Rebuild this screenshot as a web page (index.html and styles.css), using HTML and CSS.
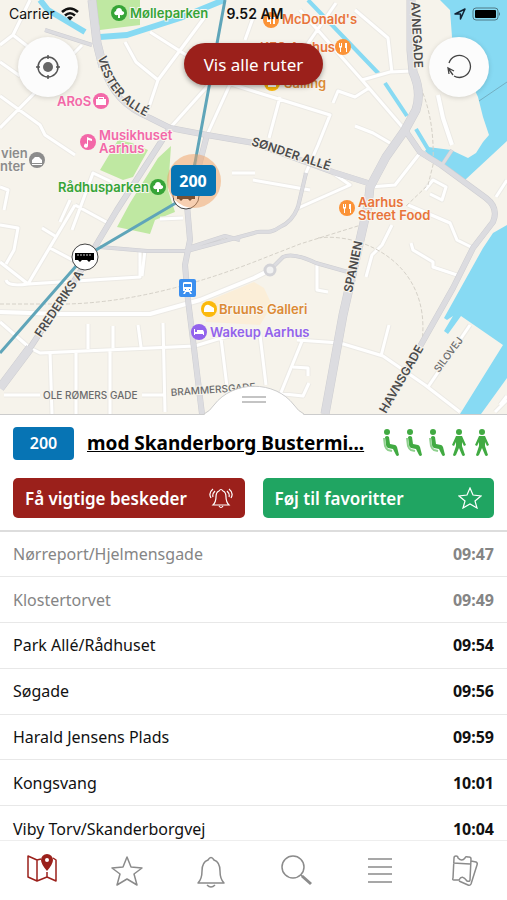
FILE: index.html
```html
<!DOCTYPE html>
<html lang="da">
<head>
	<title>Rute 200</title>
	<meta charset="utf-8">
	<meta name="viewport" content="width=device-width,initial-scale=1.0">
	<link rel="stylesheet" href="styles.css">
</head>
<body>
<div class="app">

	<!-- map -->
	<section class="map">
		<svg class="map-svg" viewBox="0 0 507 414" preserveAspectRatio="xMidYMid slice">
			<defs>
				<path id="vester" d="M98 57C103 82 118 106 156 121"/>
				<path id="sonder" d="M251 145Q290 158 337 173"/>
				<path id="frederiks" d="M41 338L92 262"/>
				<path id="spanien" d="M352 293L364 235"/>
				<path id="havn" d="M386 414L432 334"/>
				<path id="silo" d="M439 373L468 334"/>
				<path id="small-streets" d="M30 0L13 35L0 45M13 35L45 60M82 45L0 128M0 96L40 125L45 135L75 155M0 62L20 76M125 42L136 62L158 80L207 14M150 32L183 53L200 64M158 80L149 107M170 128L240 50M207 135L232 80M203 75L253 91L330 115L318 145L305 175M280 97L269 138M232 173H255M0 187L8 190L4 210M72 230L93 173L112 182M0 225L18 228L14 250L6 264M0 262L28 284L75 205M75 205L108 223M50 248L80 264M6 280Q8 287 28 284L140 277V250M145 250L142 276M60 222L70 200M42 228L55 236M254 15L245 40M300 55L336 3M300 10L362 80L390 72L411 71M355 10L388 38L392 73M333 103L338 91L355 97L369 88M362 80L405 130M355 126L373 133L390 143M253 180L310 190M333 173L350 185L296 209M370 187L395 185L420 153M425 190L433 180L446 187L442 200L430 194M392 225L382 245L372 255L366 277M411 243L413 250L433 262V267L457 275M408 205L450 223L457 240L473 248M317 263V290L328 292M496 197L507 180M0 322L30 348L40 353L195 346L218 339L233 335M88 324V349M113 326V348M138 325L141 347M163 323L165 412M50 352L52 414M76 352V414M110 351V414M4 395H40M142 395H165M221 338L228 395M260 335L266 385M297 340L340 343L383 356L425 385L460 412M302 341L280 395M293 367L308 368V376M275 393L303 396L309 383M389 325L381 356M428 387L470 325M500 405L507 396M495 412L507 400M160 219L183 218"/>
				<path id="wide-streets" d="M0 312L60 314H150L200 300L254 278L270 270M438 95L443 118L452 145"/>
				<path id="thin-roads" d="M45 30L92 45M452 150L442 165M306 173L298 207Q292 222 280 227C268 236 262 229 254 233L187 251H147L100 247M188 248L225 236L240 240M270 270L283 257Q293 252 316 263L348 272"/>
				<path id="mid-roads" d="M103 67Q113 103 150 118L170 128L207 135L254 143L333 172L368 183M207 135L197 173L187 205L190 240L185 265L188 300L193 340L202 414M405 130L420 152L441 165L486 198Q499 208 493 222L473 248L453 288L383 412M170 128L117 210L80 272L30 348"/>
				<path id="big-roads" d="M92 0L97 43L103 67M411 0V50L413 72Q422 92 416 110L405 130L386 157L370 187L368 205L343 315L325 414M30 348L0 388"/>
			</defs>

			<!-- parks, water -->
			<path class="park" d="M95 0H140V25L100 30ZM100 170L118 140L132 143L148 150L133 177L123 180ZM158 158L171 146L168 190L175 212L155 220L150 234L117 227L130 203Z"/>
			<path class="mall" d="M203 303L254 282L264 288L272 305L260 325L206 322Z"/>
			<path class="water" d="M440 0L450 10L452 37L470 80L478 97L483 117L489 135L483 142L476 153L468 158L451 150L428 147L425 151L441 165L465 180L507 141V0Z"/>
			<path class="water" d="M507 225L493 233L483 248L444 318L447 320L453 316L444 331L448 334L461 316L503 345L460 414H481L507 378Z"/>
			<path class="canal" d="M308 0L380 75M385 83L407 116M416 129L428 149"/>
			<path class="canal river" d="M40 0L48 10L85 32M100 37L127 35L180 18L224 0"/>
			<path class="seam" d="M479 101L507 82"/>

			<!-- streets -->
			<use class="street-edge" href="#small-streets"/>
			<use class="street" href="#small-streets"/>
			<use class="street-edge wide" href="#wide-streets"/>
			<use class="street wide" href="#wide-streets"/>
			<path class="rail" d="M0 304H67Q150 302 254 262L300 244L361 225M318 238C360 232 432 262 422 342M418 82C432 110 434 140 433 165L428 185L405 207"/>

			<!-- main roads: all edges first so that the crossings stay open -->
			<use class="road-edge" href="#thin-roads"/>
			<use class="road-edge mid" href="#mid-roads"/>
			<use class="road-edge big" href="#big-roads"/>
			<use class="road" href="#thin-roads"/>
			<use class="road mid" href="#mid-roads"/>
			<use class="road big" href="#big-roads"/>
			<circle class="roundabout" cx="270" cy="270" r="5"/>

			<!-- road names -->
			<g class="road-name">
				<text><textPath href="#vester">VESTER ALLÉ</textPath></text>
				<text><textPath href="#sonder">SØNDER ALLÉ</textPath></text>
				<text><textPath href="#frederiks">FREDERIKS A</textPath></text>
				<text><textPath href="#spanien">SPANIEN</textPath></text>
				<text><textPath href="#havn">HAVNSGADE</textPath></text>
				<text transform="translate(411 2) rotate(87)">AVNEGADE</text>
			</g>
			<g class="road-name thin">
				<text><textPath href="#silo">SILOVEJ</textPath></text>
				<text x="43" y="399">OLE RØMERS GADE</text>
				<text transform="translate(171 396) rotate(-4)">BRAMMERSGADE</text>
			</g>

			<!-- places -->
			<g class="poi green">
				<circle cx="119" cy="13" r="8"/>
				<path class="glyph" d="M118 18V15C114 16 113 12 116 11C116 7 122 7 122 11C126 12 124 16 120 15V18Z"/>
				<text x="130" y="18">Mølleparken</text>
				<circle cx="158" cy="187" r="8"/>
				<path class="glyph" d="M157 192V189C153 190 152 186 155 185C155 181 161 181 161 185C165 186 163 190 159 189V192Z"/>
				<text x="58" y="192">Rådhusparken</text>
			</g>
			<g class="poi pink">
				<text x="57" y="106">ARoS</text>
				<circle cx="101" cy="101" r="8"/>
				<path class="glyph" d="M96 99H98V97H104V99H106V105H96ZM99 99H103V98H99Z"/>
				<circle cx="88" cy="142" r="8"/>
				<path class="glyph" d="M87 137L92 139V141L88 140V146A2 2 0 1 1 87 144Z"/>
				<text x="99" y="140">Musikhuset</text>
				<text x="99" y="153">Aarhus</text>
			</g>
			<g class="poi grey">
				<text x="1" y="158">vien</text>
				<text x="0" y="171">nter</text>
				<circle cx="37" cy="160" r="8"/>
				<path class="glyph" d="M32 163V160L35 157H39L42 160V163ZM32 164H42V165H32Z"/>
			</g>
			<g class="poi orange">
				<circle cx="271" cy="20" r="8"/>
				<path class="glyph" d="M267 22V17H268V20H270V17H271V24H270V22ZM273 17H275V24H273Z"/>
				<text x="282" y="24">McDonald's</text>
				<text x="260" y="52">KFC Aarhus</text>
				<circle cx="343" cy="47" r="8"/>
				<path class="glyph" d="M339 43H340V46H341V43H342V47L341 48V52H340V48L339 47ZM345 43H347V52H346V48H345Z"/>
				<circle cx="347" cy="208" r="8"/>
				<path class="glyph" d="M343 204H344V207H345V204H346V208L345 209V213H344V209L343 208ZM349 204H351V213H350V209H349Z"/>
				<text x="358" y="207">Aarhus</text>
				<text x="358" y="220">Street Food</text>
			</g>
			<g class="poi gold">
				<circle cx="272" cy="83" r="8"/>
				<path class="glyph" d="M268 82H276V87H268Z"/>
				<text x="284" y="88">Salling</text>
				<circle cx="209" cy="309" r="8"/>
				<path class="glyph" d="M204 309Q205 304 209 305L214 308V312H204Z"/>
				<text x="219" y="314">Bruuns Galleri</text>
			</g>
			<g class="poi purple">
				<circle cx="199" cy="332" r="8"/>
				<path class="glyph" d="M194 329H195V332H197V330H203L204 332V335H203V334H195V335H194Z"/>
				<text x="210" y="337">Wakeup Aarhus</text>
			</g>
			<rect class="station" x="179" y="279" width="17" height="18" rx="2"/>
			<path class="glyph" d="M183 283Q183 282 185 282H190Q192 282 192 283V291H190L192 294H190L189 292H186L185 294H183L185 291H183Z"/>
			<path class="station" d="M184 284H191V287H184ZM185 289H186V290H185ZM189 289H190V290H189Z"/>

			<!-- bus route -->
			<path class="route" d="M225 0L195 163L186 197L84 257L0 353"/>
			<g class="stop">
				<circle cx="186" cy="196" r="13"/>
				<circle cx="85" cy="257" r="13"/>
				<path d="M75 253H94V260H91L89 262L87 260H82L80 262L78 260H75Z"/>
				<path class="bus-windows" d="M77 255H92"/>
				<path d="M177 192H195V199H192L190 201L188 199H183L181 201L179 199H177Z"/>
			</g>
			<circle class="halo" cx="194" cy="181" r="27"/>
			<rect class="line-box" x="171" y="165" width="45" height="31" rx="5"/>
			<text class="line-text" x="193" y="187">200</text>
		</svg>

		<header class="overlay">
			<div class="status">
				<div class="status-left">
					<span>Carrier</span>
					<svg width="18" height="14" viewBox="0 0 18 14"><path fill="none" stroke="#111" stroke-width="2.6" d="M1 5Q9-2 17 5M4 8.500Q9 4 14 8.500"/><path fill="#111" d="M6 10.500Q9 8 12 10.500L9 13.500Z"/></svg>
				</div>
				<time class="clock">9.52 AM</time>
				<div class="status-right">
					<svg width="12" height="12" viewBox="0 0 12 12"><path fill="none" stroke="#123" stroke-width="1.5" stroke-linejoin="round" d="M1 6L11 1L6.500 11V6Z"/></svg>
					<svg width="29" height="14" viewBox="0 0 29 14"><rect x="1" y="1" width="25" height="12" rx="3" fill="none" stroke="#4f7885"/><rect x="3" y="3" width="21" height="8" rx="1"/><path fill="#4f7885" d="M27 5Q29 7 27 9Z"/></svg>
				</div>
			</div>
			<div class="controls">
				<button class="round-btn" type="button" aria-label="Min position">
					<svg width="26" height="26" viewBox="0 0 26 26"><circle cx="13" cy="13" r="10" fill="none" stroke="#555" stroke-width="1.500"/><circle cx="13" cy="13" r="5" fill="#666"/><path stroke="#555" stroke-width="1.500" d="M13 1V5M13 21V25M1 13H5M21 13H25"/></svg>
				</button>
				<button class="pill" type="button">Vis alle ruter</button>
				<button class="round-btn" type="button" aria-label="Opdater">
					<svg width="28" height="26" viewBox="0 0 28 26"><path fill="none" stroke="#444" stroke-width="1.300" d="M4 9A11 11 0 1 1 9 22M4 20L3 14L9 17M3 14L8 21"/></svg>
				</button>
			</div>
		</header>
	</section>

	<!-- route panel -->
	<section class="panel">
		<svg class="grip" width="100" height="30" viewBox="0 0 100 30"><path class="grip-fill" d="M0 30Q6 26 10 20C29-5 71-5 90 20Q94 26 100 30Z"/><path class="grip-edge" d="M0 29Q6 26 10 20C29-5 71-5 90 20Q94 26 100 29"/><path class="grip-line" d="M38 12H62M38 17H62"/></svg>
		<div class="route-head">
			<span class="badge">200</span>
			<a class="direction" href="#stops">mod Skanderborg Bustermi...</a>
			<svg class="people" width="112" height="28" viewBox="0 0 112 28">
				<defs>
					<g id="sit"><circle cx="5" cy="3" r="3"/><path d="M3 8Q5 6 7 8L8 15L13 16Q14 16 15 18L17 26Q15 28 14 26L11 20L6 19Q4 18 4 16Z"/><path class="seat" d="M2 9L3 17Q4 20 6 21L10 22"/></g>
					<g id="stand"><circle cx="7" cy="3" r="3"/><path d="M4 7H10L14 16L12 17L10 13V17L13 26Q11 28 10 26L7 19L4 26Q2 28 1 26L4 17V13L2 17L0 16Z"/></g>
				</defs>
				<use href="#sit"/>
				<use href="#sit" x="23"/>
				<use href="#sit" x="46"/>
				<use href="#stand" x="70"/>
				<use href="#stand" x="93"/>
			</svg>
		</div>
		<div class="actions">
			<button class="action red" type="button">
				<span>Få vigtige beskeder</span>
				<svg width="24" height="22" viewBox="0 0 24 22"><path d="M4 18Q7 15 7 10Q7 5 10 4Q12 1 14 4Q17 5 17 10Q17 15 20 18ZM10 19Q12 22 14 19M4 2Q-1 6 2 11M6 4Q3 7 4 10M20 2Q25 6 22 11M18 4Q21 7 20 10"/></svg>
			</button>
			<button class="action green-btn" type="button">
				<span>Føj til favoritter</span>
				<svg width="24" height="22" viewBox="0 0 24 22"><path d="M12 1L15 8L23 9L17 14L19 21L12 17L5 21L7 14L1 9L9 8Z"/></svg>
			</button>
		</div>
	</section>

	<!-- stops -->
	<main class="stops" id="stops">
		<table class="stop-table">
			<tr class="passed"><td>Nørreport/Hjelmensgade</td><td class="time">09:47</td></tr>
			<tr class="passed"><td>Klostertorvet</td><td class="time">09:49</td></tr>
			<tr><td>Park Allé/Rådhuset</td><td class="time">09:54</td></tr>
			<tr><td>Søgade</td><td class="time">09:56</td></tr>
			<tr><td>Harald Jensens Plads</td><td class="time">09:59</td></tr>
			<tr><td>Kongsvang</td><td class="time">10:01</td></tr>
			<tr><td>Viby Torv/Skanderborgvej</td><td class="time">10:04</td></tr>
		</table>
	</main>

	<!-- tab bar -->
	<nav class="tabs">
		<a class="tab active" href="#kort" aria-label="Kort">
			<svg width="32" height="34" viewBox="0 0 32 34"><path d="M15 5L11 6L2 2V23L11 27L21 23L30 27V6L27 4M11 6V27M21 18V23"/><path class="pin" d="M21 17Q15 10 15 6A6 6 0 0 1 27 6Q27 10 21 17ZM21 4A2 2 0 1 0 21 8A2 2 0 0 0 21 4Z"/></svg>
		</a>
		<a class="tab" href="#favoritter" aria-label="Favoritter">
			<svg width="32" height="34" viewBox="0 0 32 34"><path d="M16 3L20 13L31 14L23 20L26 31L16 25L6 31L9 20L1 14L12 13Z"/></svg>
		</a>
		<a class="tab" href="#beskeder" aria-label="Beskeder">
			<svg width="32" height="34" viewBox="0 0 32 34"><path d="M3 29Q7 25 7 17Q7 8 13 6Q16 1 19 6Q25 8 25 17Q25 25 29 29ZM12 31Q16 35 20 31"/></svg>
		</a>
		<a class="tab" href="#soeg" aria-label="Søg">
			<svg width="32" height="34" viewBox="0 0 32 34"><circle cx="13" cy="13" r="11"/><path d="M21 21L23 23"/><path class="thick" d="M22 22L31 30"/></svg>
		</a>
		<a class="tab" href="#menu" aria-label="Menu">
			<svg width="32" height="34" viewBox="0 0 32 34"><path d="M4 5H28M4 13H28M4 20H28M4 28H28"/></svg>
		</a>
		<a class="tab" href="#billetter" aria-label="Billetter">
			<svg width="32" height="34" viewBox="0 0 32 34"><path d="M5 4Q5 2 7 2Q9 2 9 4Q13 8 16 4Q17 2 19 3H20Q22 3 22 5L21 26Q21 28 18 27Q13 20 10 26L5 26Q3 26 4 24ZM4 9L21 10M22 7L27 8Q29 9 28 11L22 30Q21 32 19 31L10 27"/></svg>
		</a>
	</nav>
</div>
</body>
</html>
```
FILE: styles.css
```css
* {
	box-sizing: border-box;
}
body {
	margin: 0;
	background-color: #fff;
	font-family: "Noto Sans", "Open Sans", sans-serif;
	color: #111;
}
button {
	border: 0;
	padding: 0;
	font-family: inherit;
	cursor: pointer;
}
svg {
	display: block;
	flex: none;
}
.app {
	display: flex;
	flex-direction: column;
	height: 100vh;
}

/* map */
.map {
	position: relative;
	height: 46vh;
	flex: none;
	overflow: hidden;
	background-color: #f6f3eb;
}
.map-svg {
	width: 100%;
	height: 100%;
	font-family: Inter, "Liberation Sans", sans-serif;
}
.map-svg path {
	stroke-linejoin: round;
}
.park {
	fill: #bfe8a2;
}
.mall {
	fill: #fbeed8;
}
.water {
	fill: #87daf3;
}
.canal {
	fill: none;
	stroke: #87daf3;
	stroke-width: 4;
}
.river {
	stroke-width: 6;
}
.seam {
	stroke: #73afc2;
}
.street,
.street-edge,
.road,
.road-edge,
.rail {
	fill: none;
}
.street {
	stroke: #fff;
	stroke-width: 3;
}
.street-edge {
	stroke: #eceae5;
	stroke-width: 5;
}
.street.wide {
	stroke-width: 4;
}
.street-edge.wide {
	stroke-width: 6;
}
.road {
	stroke: #dcdce0;
	stroke-width: 3;
}
.road-edge {
	stroke: #cdcdd1;
	stroke-width: 4;
}
.road.mid {
	stroke-width: 5;
}
.road-edge.mid {
	stroke-width: 6;
}
.road.big {
	stroke-width: 8;
}
.road-edge.big {
	stroke-width: 9;
}
.rail {
	stroke: #d5d1c8;
	stroke-dasharray: 4 2;
}
.roundabout {
	fill: #f2f2f2;
	stroke: #d3d3d7;
	stroke-width: 3;
}
.road-name {
	font-size: 12px;
	font-weight: 600;
	fill: #4b4b4b;
	stroke: #f6f3eb;
	stroke-width: 2px;
	paint-order: stroke;
}
.road-name.thin {
	font-size: 10px;
	font-weight: 500;
	fill: #6b6b6b;
}
.poi {
	font-size: 13px;
	font-weight: 600;
}
.poi text {
	stroke: #f8f6f0;
	stroke-width: 2px;
	paint-order: stroke;
}
.green {
	fill: #36a437;
}
.pink {
	fill: #f368a8;
}
.grey {
	fill: #8c8c8c;
}
.orange {
	fill: #e8743a;
}
.orange circle {
	fill: #fb9337;
}
.gold {
	fill: #dc8a35;
}
.gold circle {
	fill: #fbb90c;
}
.purple {
	fill: #9263ec;
}
.glyph {
	fill: #fff;
	fill-rule: evenodd;
}
.station {
	fill: #3b8fef;
}
.route {
	fill: none;
	stroke: #5fa5b9;
	stroke-width: 3;
}
.halo {
	fill: #f0a063;
	opacity: 0.5;
}
.stop circle {
	fill: #fff;
	stroke: #444;
}
.bus-windows {
	stroke: #ccc;
	stroke-dasharray: 2 1;
}
.line-box {
	fill: #0774b4;
}
.line-text {
	font-family: "Noto Sans", sans-serif;
	font-size: 16px;
	font-weight: 700;
	text-anchor: middle;
	fill: #fff;
}

/* on top of the map */
.overlay {
	position: absolute;
	top: 0;
	left: 0;
	right: 0;
}
.status {
	display: grid;
	grid-template-columns: 1fr auto 1fr;
	align-items: center;
	height: 27px;
	padding: 0 6px 0 9px;
	font-family: Inter, "Liberation Sans", sans-serif;
	font-size: 14px;
}
.status-left,
.status-right {
	display: flex;
	align-items: center;
	gap: 6px;
}
.status-right {
	justify-content: flex-end;
}
.clock {
	font-weight: 600;
}
.controls {
	display: flex;
	align-items: flex-start;
	justify-content: space-between;
	padding: 10px 18px;
}
.round-btn {
	display: flex;
	align-items: center;
	justify-content: center;
	width: 60px;
	height: 60px;
	border-radius: 50%;
	background-color: #fcfcfc;
	box-shadow: 0 1px 5px rgba(0, 0, 0, 0.15);
}
.pill {
	height: 42px;
	margin-top: 6px;
	padding: 0 20px;
	border-radius: 21px;
	background-color: #9b201b;
	box-shadow: 0 2px 5px rgba(0, 0, 0, 0.35);
	color: #fff;
	font-size: 17px;
}

/* panel */
.panel {
	position: relative;
	flex: none;
	padding: 11px 13px 12px;
	border-top: 1px solid #ccc;
	border-bottom: 2px solid #ddd;
	background-color: #fff;
}
.grip {
	position: absolute;
	bottom: 100%;
	left: 50%;
	margin-left: -50px;
}
.grip-fill {
	fill: #fff;
}
.grip-edge {
	fill: none;
	stroke: #ccc;
}
.grip-line {
	stroke: #c4c4c4;
	stroke-width: 2;
}
.route-head {
	display: flex;
	align-items: center;
	height: 34px;
}
.badge {
	width: 61px;
	flex: none;
	border-radius: 4px;
	background-color: #0774b4;
	color: #fff;
	font-size: 16px;
	font-weight: 600;
	line-height: 33px;
	text-align: center;
}
.direction {
	flex: 1;
	min-width: 0;
	margin: 0 6px 0 13px;
	overflow: hidden;
	color: #000;
	font-size: 19px;
	font-weight: 700;
	line-height: 30px;
	white-space: nowrap;
}
.people {
	fill: #41aa42;
}
.seat {
	fill: none;
	stroke: #8fd08e;
	stroke-width: 2;
}
.actions {
	display: flex;
	gap: 18px;
	margin-top: 18px;
}
.action {
	display: flex;
	flex: 1;
	align-items: center;
	justify-content: space-between;
	height: 40px;
	padding: 0 12px;
	border-radius: 5px;
	color: #fff;
	font-size: 17px;
	font-weight: 600;
}
.action svg {
	fill: none;
	stroke: #fff;
	stroke-width: 1.2;
}
.red {
	background-color: #9b201b;
}
.green-btn {
	background-color: #20a562;
}

/* stop list */
.stops {
	flex: 1;
	min-height: 0;
	overflow-y: auto;
	scrollbar-width: none;
}
.stop-table {
	width: 100%;
	height: 320px;
	border-collapse: collapse;
	font-size: 16px;
	line-height: 24px;
}
.stop-table td {
	padding: 0 13px;
	border-bottom: 1px solid #e8e8e8;
}
.stop-table .time {
	font-weight: 700;
	text-align: right;
}
.passed {
	color: #858585;
}

/* tabs */
.tabs {
	display: grid;
	grid-template-columns: repeat(6, 1fr);
	flex: none;
	height: 60px;
	border-top: 1px solid #eee;
	background-color: #fff;
}
.tab {
	display: flex;
	align-items: center;
	justify-content: center;
}
.tab svg {
	fill: none;
	stroke: #8b8b8b;
	stroke-width: 1.5;
	stroke-linejoin: round;
}
.tab.active svg {
	stroke: #9b201b;
}
.tab .pin {
	fill: #9b201b;
	fill-rule: evenodd;
	stroke: none;
}
.tab .thick {
	stroke-width: 3;
}
```
